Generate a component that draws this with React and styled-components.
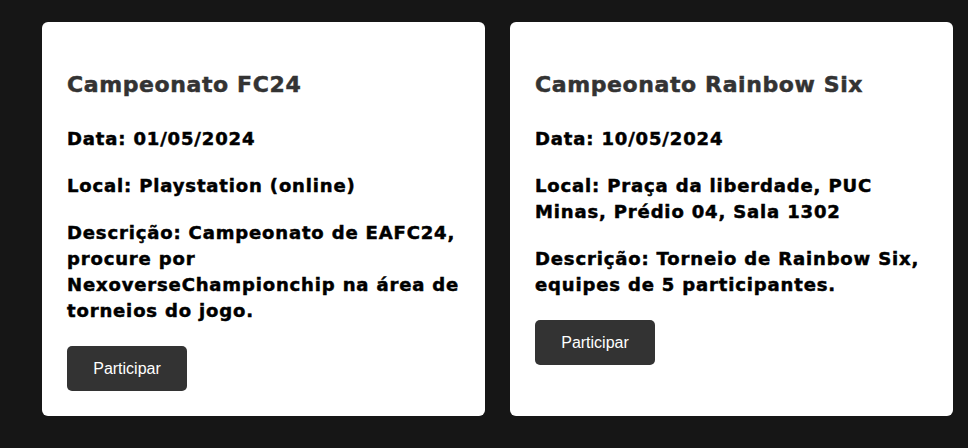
import React from 'react';
import styled, { createGlobalStyle } from 'styled-components';

const GlobalStyle = createGlobalStyle`
  body {
    margin: 0;
    background-color: #161616;
    font-family: "DejaVu Sans", "Liberation Sans", sans-serif;
  }
`;

const CardGrid = styled.div`
  display: grid;
  grid-template-columns: 443px 443px;
  gap: 25px;
  padding: 22px 0 0 42px;
`;

const Card = styled.div`
  background-color: #fff;
  border-radius: 6px;
  padding: 24px 25px 25px 25px;
`;

const Title = styled.h3`
  margin: 24px 0 26px;
  font-size: 22px;
  line-height: 30px;
  font-weight: 700;
  letter-spacing: 0.6px;
  color: #333;
  -webkit-text-stroke: 0.5px #333;
`;

const Info = styled.p`
  margin: 0 0 21px;
  font-size: 18px;
  line-height: 26px;
  font-weight: 700;
  letter-spacing: 0.85px;
  color: #000;
  -webkit-text-stroke: 0.5px #000;
`;

const JoinButton = styled.button`
  display: block;
  width: 120px;
  height: 45px;
  margin-top: 22px;
  padding: 0;
  background-color: #333;
  color: #fff;
  border: none;
  border-radius: 5px;
  font-family: "Liberation Sans", Arial, sans-serif;
  font-size: 16px;
  cursor: pointer;
`;

const tournaments = [
  {
    id: 1,
    name: 'Campeonato FC24',
    date: '01/05/2024',
    place: 'Playstation (online)',
    description:
      'Campeonato de EAFC24, procure por NexoverseChampionchip na área de torneios do jogo.',
  },
  {
    id: 2,
    name: 'Campeonato Rainbow Six',
    date: '10/05/2024',
    place: 'Praça da liberdade, PUC Minas, Prédio 04, Sala 1302',
    description: 'Torneio de Rainbow Six, equipes de 5 participantes.',
  },
];

const App = () => {
  return (
    <>
      <GlobalStyle />
      <CardGrid>
        {tournaments.map((t) => (
          <Card key={t.id}>
            <Title>{t.name}</Title>
            <Info>Data: {t.date}</Info>
            <Info>Local: {t.place}</Info>
            <Info>Descrição: {t.description}</Info>
            <JoinButton>Participar</JoinButton>
          </Card>
        ))}
      </CardGrid>
    </>
  );
};

export default App;
